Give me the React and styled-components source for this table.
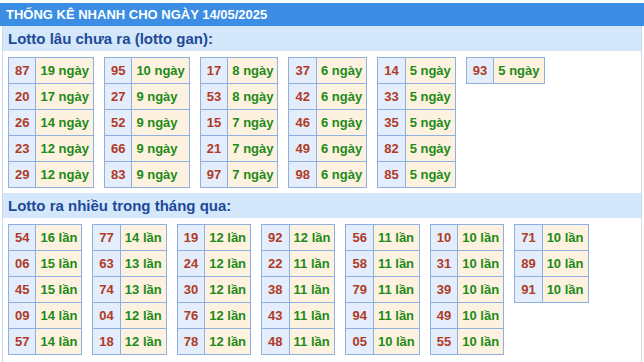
import styled, { createGlobalStyle } from "styled-components";

const GlobalStyle = createGlobalStyle`
  body {
    margin: 0;
    padding-top: 3px;
    background: #fff;
    font-family: "Liberation Sans", Arial, sans-serif;
  }
`;

const gan = [
  [["87", 19], ["20", 17], ["26", 14], ["23", 12], ["29", 12]],
  [["95", 10], ["27", 9], ["52", 9], ["66", 9], ["83", 9]],
  [["17", 8], ["53", 8], ["15", 7], ["21", 7], ["97", 7]],
  [["37", 6], ["42", 6], ["46", 6], ["49", 6], ["98", 6]],
  [["14", 5], ["33", 5], ["35", 5], ["82", 5], ["85", 5]],
  [["93", 5]],
];

const nhieu = [
  [["54", 16], ["06", 15], ["45", 15], ["09", 14], ["57", 14]],
  [["77", 14], ["63", 13], ["74", 13], ["04", 12], ["18", 12]],
  [["19", 12], ["24", 12], ["30", 12], ["76", 12], ["78", 12]],
  [["92", 12], ["22", 11], ["38", 11], ["43", 11], ["48", 11]],
  [["56", 11], ["58", 11], ["79", 11], ["94", 11], ["05", 10]],
  [["10", 10], ["31", 10], ["39", 10], ["49", 10], ["55", 10]],
  [["71", 10], ["89", 10], ["91", 10]],
];

const App = () => {
  return (
    <>
      <GlobalStyle />
      <Header>THỐNG KÊ NHANH CHO NGÀY 14/05/2025</Header>
      <Box>
        <SectionTitle>Lotto lâu chưa ra (lotto gan):</SectionTitle>
        <Tables>
          {gan.map((rows, i) => (
            <LotoTable key={i} rows={rows} unit="ngày" />
          ))}
        </Tables>
        <SectionTitle>Lotto ra nhiều trong tháng qua:</SectionTitle>
        <Tables>
          {nhieu.map((rows, i) => (
            <LotoTable key={i} rows={rows} unit="lần" />
          ))}
        </Tables>
      </Box>
    </>
  );
};

const LotoTable = ({ rows, unit }) => (
  <Table>
    <tbody>
      {rows.map(([num, count]) => (
        <tr key={num}>
          <NumCell>{num}</NumCell>
          <CountCell>
            {count} {unit}
          </CountCell>
        </tr>
      ))}
    </tbody>
  </Table>
);

export default App;

const Header = styled.div`
  height: 23px;
  line-height: 23px;
  padding-left: 6px;
  background: #3b8ee4;
  color: #fff;
  font-size: 13px;
  font-weight: bold;
`;

const Box = styled.div`
  margin: 0 2px;
  border-left: 1px solid #c9d9ee;
  border-right: 1px solid #c9d9ee;
  min-height: 340px;
`;

const SectionTitle = styled.div`
  height: 25px;
  line-height: 25px;
  padding-left: 5px;
  background: #d5e7fb;
  color: #1d4a99;
  font-size: 15px;
  font-weight: bold;
`;

const Tables = styled.div`
  display: flex;
  align-items: flex-start;
  gap: 10px;
  padding: 6px 5px 5px;
`;

const Table = styled.table`
  border-collapse: collapse;
  font-size: 13px;
  font-weight: bold;
`;

const Cell = styled.td`
  height: 25px;
  padding: 0 4px;
  border: 1px solid #8eb0e0;
  white-space: nowrap;
`;

const NumCell = styled(Cell)`
  background: #e3edfb;
  color: #b03a26;
  padding: 0 6px;
`;

const CountCell = styled(Cell)`
  background: #fdf2e0;
  color: #1e8a18;
`;
